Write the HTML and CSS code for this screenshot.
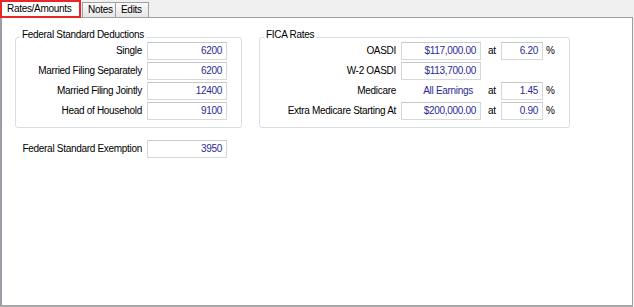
FILE: index.html
```html
<!DOCTYPE html>
<html>
<head>
<meta charset="utf-8">
<link rel="stylesheet" href="styles.css">
</head>
<body>
<div class="window">
  <div class="tabs">
    <div class="tab active">Rates/Amounts</div>
    <div class="tab">Notes</div>
    <div class="tab">Edits</div>
  </div>
  <div class="panel">
    <div class="groups">
      <div class="group ded">
        <div class="group-title">Federal Standard Deductions</div>
        <div class="ded-grid">
          <span class="lbl">Single</span><span class="box">6200</span>
          <span class="lbl">Married Filing Separately</span><span class="box">6200</span>
          <span class="lbl">Married Filing Jointly</span><span class="box">12400</span>
          <span class="lbl">Head of Household</span><span class="box">9100</span>
        </div>
      </div>
      <div class="group fica">
        <div class="group-title">FICA Rates</div>
        <div class="fica-grid">
          <span class="lbl">OASDI</span><span class="box">$117,000.00</span><span class="at">at</span><span class="box">6.20</span><span class="pct">%</span>
          <span class="lbl">W-2 OASDI</span><span class="box">$113,700.00</span><span></span><span></span><span></span>
          <span class="lbl">Medicare</span><span class="plain">All Earnings</span><span class="at">at</span><span class="box">1.45</span><span class="pct">%</span>
          <span class="lbl">Extra Medicare Starting At</span><span class="box">$200,000.00</span><span class="at">at</span><span class="box">0.90</span><span class="pct">%</span>
        </div>
      </div>
    </div>
    <div class="exempt">
      <span class="lbl">Federal Standard Exemption</span><span class="box">3950</span>
    </div>
  </div>
</div>
</body>
</html>
```
FILE: styles.css
```css
html, body {
  margin: 0;
  padding: 0;
  background: #f0f0f0;
}
body {
  font-family: "Liberation Sans", Arial, sans-serif;
  font-size: 10px;
  letter-spacing: -0.3px;
  color: #000;
}
.window {
  width: 633px;
  height: 307px;
  display: flex;
  flex-direction: column;
}
.tabs {
  height: 17px;
  display: flex;
  align-items: flex-end;
}
.tab {
  box-sizing: border-box;
  height: 15px;
  padding: 0 0 0 5px;
  line-height: 14px;
  border: 1px solid #a0a0a0;
  border-bottom: none;
  background: linear-gradient(#fafafa, #e6e6e6);
  margin-left: -1px;
}
.tab:nth-child(2) {
  margin-left: 1px;
  width: 34px;
}
.tab:nth-child(3) {
  width: 34px;
}
.tab.active {
  margin-left: 0;
  height: 18px;
  width: 81px;
  margin-bottom: -1px;
  border: 2px solid #e8262a;
  background: #fff;
  padding: 0 0 0 5px;
  line-height: 14px;
  position: relative;
  z-index: 1;
}
.panel {
  flex: 1;
  background: #fff;
  border-top: 1px solid #a0a0a0;
  border-left: 2px solid #9c9ca4;
  border-right: 1px solid #a0a0a0;
  border-bottom: 2px solid #a8a8a8;
}
.groups {
  display: flex;
  gap: 17px;
  margin: 19px 0 0 13px;
}
.group {
  box-sizing: border-box;
  border: 1px solid #d5dfe5;
  border-radius: 3px;
  height: 91px;
  display: flex;
  flex-direction: column;
}
.ded {
  width: 227px;
}
.fica {
  width: 311px;
}
.group-title {
  align-self: flex-start;
  background: #fff;
  line-height: 12px;
  height: 12px;
  margin: -9px 0 0 4px;
  padding: 0 2px;
}
.ded-grid {
  display: grid;
  grid-template-columns: 1fr 80px;
  grid-auto-rows: 18px;
  column-gap: 5px;
  row-gap: 2px;
  margin-top: 1px;
  padding-right: 14px;
}
.fica-grid {
  display: grid;
  grid-template-columns: 1fr 80px 20px 42px 26px;
  grid-auto-rows: 18px;
  row-gap: 2px;
  margin-top: 1px;
}
.lbl {
  text-align: right;
  line-height: 18px;
  white-space: nowrap;
}
.fica-grid .lbl {
  padding-right: 5px;
}
.box {
  box-sizing: border-box;
  height: 18px;
  border: 1px solid #d4d7db;
  border-top-color: #c4c8cc;
  text-align: right;
  padding-right: 4px;
  line-height: 16px;
  color: #2a2a96;
  background: #fff;
}
.plain {
  text-align: right;
  padding-right: 8px;
  line-height: 18px;
  color: #2a2a96;
}
.at {
  line-height: 18px;
  padding-left: 7px;
}
.pct {
  line-height: 18px;
  padding-left: 3px;
}
.exempt {
  display: grid;
  grid-template-columns: 1fr 80px;
  column-gap: 5px;
  width: 212px;
  margin: 12px 0 0 13px;
  height: 18px;
}
```
